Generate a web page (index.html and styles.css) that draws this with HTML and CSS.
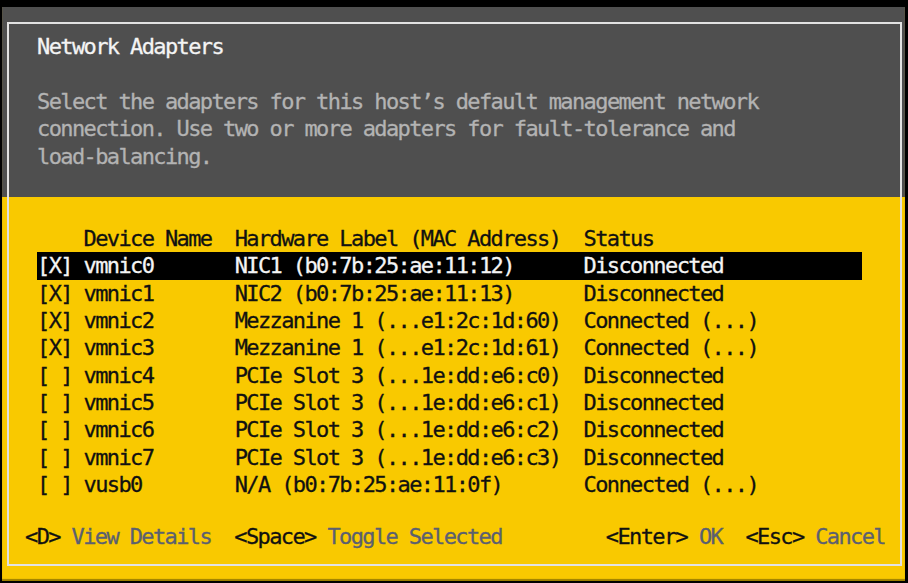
FILE: index.html
```html
<!DOCTYPE html>
<html lang="en">
<head>
<meta charset="utf-8">
<title>Network Adapters</title>
<link rel="stylesheet" href="styles.css">
</head>
<body>
<div class="screen">
  <div class="frame">
    <div class="head">
      <div class="title">Network Adapters</div>
      <div class="desc">
        <div class="line">Select the adapters for this host’s default management network</div>
        <div class="line">connection. Use two or more adapters for fault-tolerance and</div>
        <div class="line">load-balancing.</div>
      </div>
    </div>
    <div class="table">
      <div class="row hdr"><span></span><span>Device Name</span><span>Hardware Label (MAC Address)</span><span>Status</span></div>
      <div class="row sel"><span>[X]</span><span>vmnic0</span><span>NIC1 (b0:7b:25:ae:11:12)</span><span>Disconnected</span></div>
      <div class="row"><span>[X]</span><span>vmnic1</span><span>NIC2 (b0:7b:25:ae:11:13)</span><span>Disconnected</span></div>
      <div class="row"><span>[X]</span><span>vmnic2</span><span>Mezzanine 1 (...e1:2c:1d:60)</span><span>Connected (...)</span></div>
      <div class="row"><span>[X]</span><span>vmnic3</span><span>Mezzanine 1 (...e1:2c:1d:61)</span><span>Connected (...)</span></div>
      <div class="row"><span>[ ]</span><span>vmnic4</span><span>PCIe Slot 3 (...1e:dd:e6:c0)</span><span>Disconnected</span></div>
      <div class="row"><span>[ ]</span><span>vmnic5</span><span>PCIe Slot 3 (...1e:dd:e6:c1)</span><span>Disconnected</span></div>
      <div class="row"><span>[ ]</span><span>vmnic6</span><span>PCIe Slot 3 (...1e:dd:e6:c2)</span><span>Disconnected</span></div>
      <div class="row"><span>[ ]</span><span>vmnic7</span><span>PCIe Slot 3 (...1e:dd:e6:c3)</span><span>Disconnected</span></div>
      <div class="row"><span>[ ]</span><span>vusb0</span><span>N/A (b0:7b:25:ae:11:0f)</span><span>Connected (...)</span></div>
    </div>
    <div class="footer">
      <div class="group">
        <span class="cmd"><span class="key">&lt;D&gt;</span> <span class="lbl">View Details</span></span>
        <span class="cmd"><span class="key">&lt;Space&gt;</span> <span class="lbl">Toggle Selected</span></span>
      </div>
      <div class="group">
        <span class="cmd"><span class="key">&lt;Enter&gt;</span> <span class="lbl">OK</span></span>
        <span class="cmd"><span class="key">&lt;Esc&gt;</span> <span class="lbl">Cancel</span></span>
      </div>
    </div>
  </div>
</div>
</body>
</html>
```

FILE: styles.css
```css
html, body {
  margin: 0;
  background: #000;
}
body {
  width: 908px;
  height: 583px;
  padding: 7px 3px 2px 2px;
  box-sizing: border-box;
  overflow: hidden;
  font-family: "DejaVu Sans Mono", monospace;
  font-size: 22px;
  letter-spacing: -1.615px;
  line-height: 27.4px;
  -webkit-text-stroke: 0.3px currentColor;
}
.screen {
  height: 100%;
  box-sizing: border-box;
  padding: 15px 3px 15px 5px;
  background: linear-gradient(to bottom, #4f4f4f 0, #4f4f4f 190px, #f9c900 190px, #f9c900 100%);
  box-shadow: inset 0 -2px 1px #9c7f00;
}
.frame {
  height: 100%;
  box-sizing: border-box;
  border: 2px solid #e2e2e2;
}
.head {
  padding: 9px 0 0 28px;
}
.title {
  color: #f4f4f4;
  height: 27.4px;
  margin-bottom: 27.4px;
  white-space: pre;
}
.desc .line {
  color: #b3b3b3;
  height: 27.4px;
  white-space: pre;
}
.table {
  margin: 54.8px 0 0 28px;
  width: 825px;
  color: #111;
}
.row {
  display: grid;
  grid-template-columns: 46.52px 151.19px 348.9px 1fr;
  height: 27.4px;
}
.row span {
  white-space: pre;
}
.row.sel {
  background: #000;
  color: #f4f4f4;
}
.footer {
  margin-top: 24.2px;
  padding: 0 15px 0 16px;
  display: flex;
  justify-content: space-between;
}
.group {
  display: flex;
  gap: 23.26px;
}
.cmd {
  white-space: pre;
}
.key {
  color: #111;
}
.lbl {
  color: #5b6070;
}
```
